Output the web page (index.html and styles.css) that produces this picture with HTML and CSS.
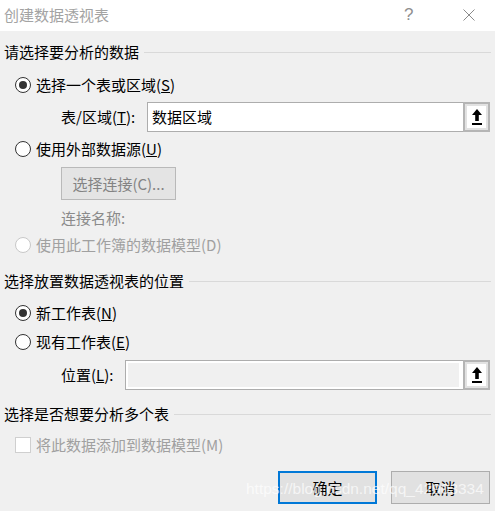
FILE: index.html
```html
<!DOCTYPE html>
<html lang="zh-CN">
<head>
<meta charset="utf-8">
<title>创建数据透视表</title>
<link rel="stylesheet" href="styles.css">
</head>
<body>
<div class="titlebar">
  <span class="title-text">创建数据透视表</span>
  <span class="help">?</span>
  <svg class="close" width="12" height="12" viewBox="0 0 12 12"><path d="M0.5 0.5L11.5 11.5M11.5 0.5L0.5 11.5" stroke="#8a8a8a" stroke-width="1" fill="none"/></svg>
</div>
<div class="content">
  <div class="section sec1">请选择要分析的数据</div>
  <div class="row radio-row r1"><span class="radio checked"></span><span>选择一个表或区域(<u>S</u>)</span></div>
  <div class="field-row f1">
    <span class="label lbl-range">表/区域(<u>T</u>):</span>
    <div class="field"><span class="field-text">数据区域</span>
      <span class="pick"><svg width="10" height="16" viewBox="0 0 10 16"><polygon points="5,0 10,6 6.8,6 6.8,12 3.2,12 3.2,6 0,6" fill="#000"/><rect x="0" y="14" width="10" height="2" fill="#000"/></svg></span>
    </div>
  </div>
  <div class="row radio-row r2"><span class="radio"></span><span>使用外部数据源(<u>U</u>)</span></div>
  <div class="btn-disabled">选择连接(C)...</div>
  <div class="row conn-name">连接名称:</div>
  <div class="row radio-row r3 disabled"><span class="radio dis"></span><span>使用此工作簿的数据模型(D)</span></div>
  <div class="section sec2">选择放置数据透视表的位置</div>
  <div class="row radio-row r4"><span class="radio checked"></span><span>新工作表(<u>N</u>)</span></div>
  <div class="row radio-row r5"><span class="radio"></span><span>现有工作表(<u>E</u>)</span></div>
  <div class="field-row f2">
    <span class="label lbl-loc">位置(<u>L</u>):</span>
    <div class="field field-dis"><span class="field-inner"></span>
      <span class="pick"><svg width="10" height="16" viewBox="0 0 10 16"><polygon points="5,0 10,6 6.8,6 6.8,12 3.2,12 3.2,6 0,6" fill="#000"/><rect x="0" y="14" width="10" height="2" fill="#000"/></svg></span>
    </div>
  </div>
  <div class="section sec3">选择是否想要分析多个表</div>
  <div class="row radio-row r6 disabled"><span class="checkbox"></span><span>将此数据添加到数据模型(M)</span></div>
  <div class="buttons">
    <div class="btn btn-default">确定</div>
    <div class="btn">取消</div>
  </div>
</div>
<div class="watermark">https://blog.csdn.net/qq_42903334</div>
</body>
</html>
```
FILE: styles.css
```css
html, body {
  margin: 0;
  padding: 0;
}
body {
  width: 495px;
  height: 511px;
  background: #f0f0f0;
  font-family: "Noto Sans CJK SC", "Noto Sans", sans-serif;
  font-size: 15px;
  color: #000;
  overflow: hidden;
  position: relative;
}
.titlebar {
  height: 31px;
  background: #fff;
  display: flex;
  align-items: center;
  padding-left: 4px;
  color: #a3a3a3;
  line-height: 20px;
}
.title-text {
  flex: 1;
  margin-top: -2px;
}
.help {
  font-family: "Liberation Sans", sans-serif;
  font-size: 17px;
  color: #8f8f8f;
  width: 11px;
  margin-right: 48px;
  margin-top: -2px;
}
.close {
  margin-right: 20px;
  margin-top: -2px;
}
.content {
  padding: 0 4px 0 4px;
}
.row {
  height: 20px;
  line-height: 20px;
  display: flex;
  align-items: center;
  white-space: nowrap;
}
.section {
  height: 20px;
  line-height: 20px;
  display: flex;
  align-items: center;
  gap: 5px;
  white-space: nowrap;
}
.section::after {
  content: "";
  flex: 1;
  border-top: 1px solid #d9d9d9;
  margin-top: 1px;
}
.sec1 { margin-top: 11px; }
.sec2 { margin-top: 16px; }
.sec3 { margin-top: 14px; }
.radio-row {
  padding-left: 11px;
  gap: 5px;
}
.r1 { margin-top: 13px; }
.r2 { margin-top: 7px; }
.r3 { margin-top: 7px; }
.r4 { margin-top: 12px; }
.r5 { margin-top: 9px; }
.r6 { margin-top: 11px; }
.radio {
  width: 16px;
  height: 16px;
  box-sizing: border-box;
  border: 1px solid #333;
  border-radius: 50%;
  background: #fff;
  position: relative;
  flex: none;
}
.radio.checked::after {
  content: "";
  position: absolute;
  left: 3px;
  top: 3px;
  width: 8px;
  height: 8px;
  border-radius: 50%;
  background: #333;
}
.radio.dis {
  border-color: #c8c8c8;
}
.checkbox {
  width: 16px;
  height: 16px;
  box-sizing: border-box;
  border: 1px solid #cfcfcf;
  background: #fff;
  flex: none;
}
.disabled {
  color: #a0a0a0;
}
.field-row {
  display: flex;
  align-items: center;
  height: 30px;
  padding-left: 57px;
  white-space: nowrap;
  line-height: 20px;
}
.f1 { margin-top: 7px; }
.f2 { margin-top: 8px; }
.lbl-range { width: 86px; flex: none; }
.lbl-loc { width: 64px; flex: none; }
.field {
  flex: 1;
  height: 30px;
  box-sizing: border-box;
  border: 1px solid #adadad;
  background: #fff;
  display: flex;
  align-items: center;
  margin-right: 1px;
}
.field-text {
  flex: 1;
  padding-left: 4px;
}
.field-dis {
  padding: 2px 0 2px 2px;
}
.field-inner {
  flex: 1;
  align-self: stretch;
  background: #f0f0f0;
  margin-right: 4px;
}
.pick {
  width: 27px;
  height: 30px;
  box-sizing: border-box;
  border: 2px solid #b5b5b5;
  background: #fff;
  box-shadow: inset 0 0 0 2px #e2e2e2;
  display: flex;
  align-items: center;
  justify-content: center;
  margin: -1px -1px -1px 0;
  flex: none;
}
.field-dis .pick {
  margin: -3px -1px -3px 0;
}
.btn-disabled {
  margin-top: 8px;
  margin-left: 57px;
  width: 115px;
  height: 33px;
  box-sizing: border-box;
  border: 1px solid #b9b9b9;
  background: #e4e4e4;
  color: #838383;
  display: flex;
  align-items: center;
  justify-content: center;
  line-height: 20px;
}
.conn-name {
  margin-top: 8px;
  padding-left: 57px;
  color: #8a8a8a;
}
.buttons {
  margin-top: 16px;
  display: flex;
  justify-content: flex-end;
  gap: 14px;
  padding-right: 1px;
}
.btn {
  width: 99px;
  height: 33px;
  box-sizing: border-box;
  border: 1px solid #adadad;
  background: #e1e1e1;
  display: flex;
  align-items: center;
  justify-content: center;
  line-height: 20px;
}
.btn-default {
  width: 99px;
  border: 2px solid #0078d7;
}
.watermark {
  position: absolute;
  left: 246px;
  top: 480px;
  font-family: "Liberation Sans", sans-serif;
  font-size: 15.5px;
  color: rgba(255, 255, 255, 0.7);
  white-space: nowrap;
  pointer-events: none;
}
```
